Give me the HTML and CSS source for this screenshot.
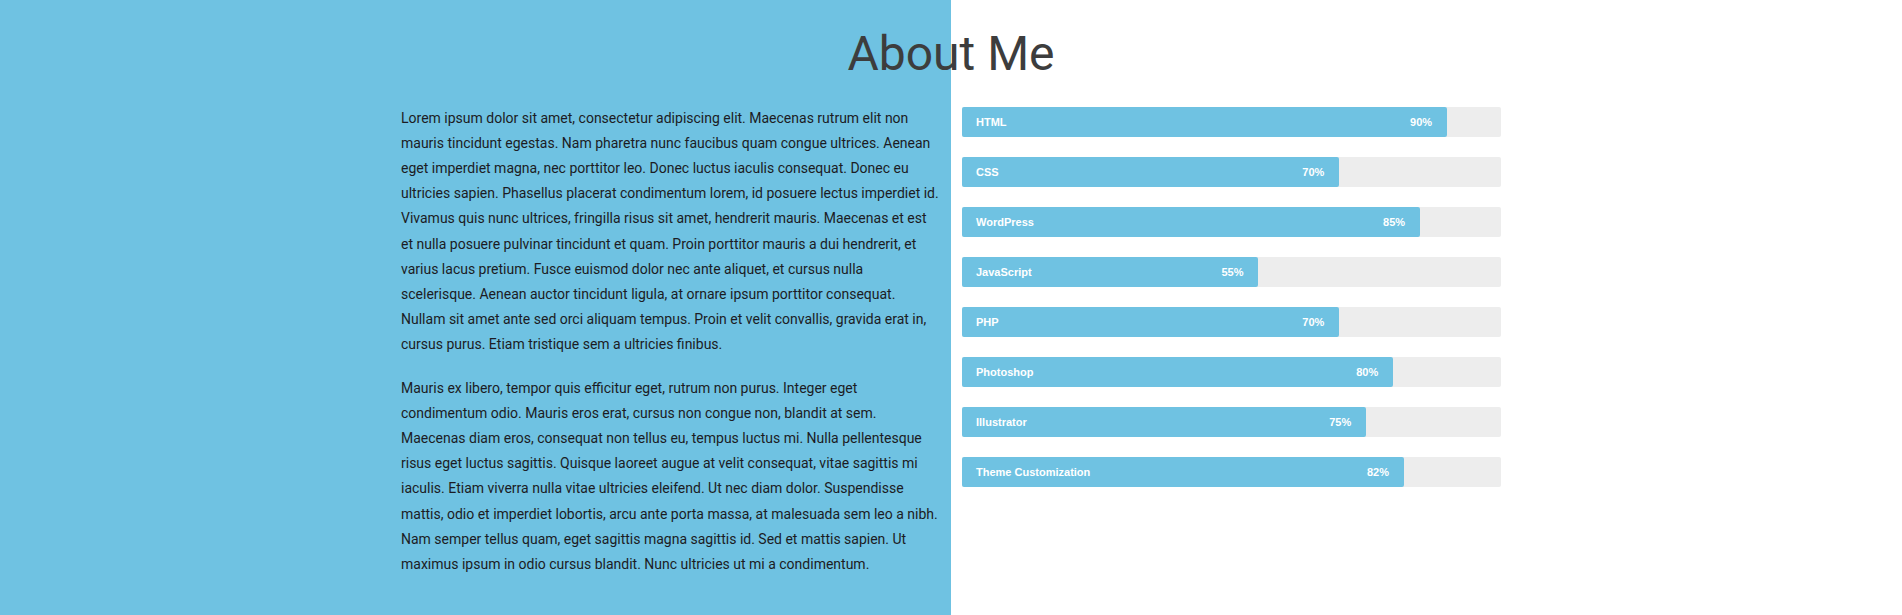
FILE: index.html
```html
<!DOCTYPE html>
<html lang="en">
<head>
<meta charset="utf-8">
<title>About Me</title>
<link rel="stylesheet" href="styles.css">
</head>
<body>
<section class="about">
  <h2 class="about-title">About Me</h2>
  <div class="about-inner">
    <div class="about-text">
      <p>Lorem ipsum dolor sit amet, consectetur adipiscing elit. Maecenas rutrum elit non mauris tincidunt egestas. Nam pharetra nunc faucibus quam congue ultrices. Aenean eget imperdiet magna, nec porttitor leo. Donec luctus iaculis consequat. Donec eu ultricies sapien. Phasellus placerat condimentum lorem, id posuere lectus imperdiet id. Vivamus quis nunc ultrices, fringilla risus sit amet, hendrerit mauris. Maecenas et est et nulla posuere pulvinar tincidunt et quam. Proin porttitor mauris a dui hendrerit, et varius lacus pretium. Fusce euismod dolor nec ante aliquet, et cursus nulla scelerisque. Aenean auctor tincidunt ligula, at ornare ipsum porttitor consequat. Nullam sit amet ante sed orci aliquam tempus. Proin et velit convallis, gravida erat in, cursus purus. Etiam tristique sem a ultricies finibus.</p>
      <p>Mauris ex libero, tempor quis efficitur eget, rutrum non purus. Integer eget condimentum odio. Mauris eros erat, cursus non congue non, blandit at sem. Maecenas diam eros, consequat non tellus eu, tempus luctus mi. Nulla pellentesque risus eget luctus sagittis. Quisque laoreet augue at velit consequat, vitae sagittis mi iaculis. Etiam viverra nulla vitae ultricies eleifend. Ut nec diam dolor. Suspendisse mattis, odio et imperdiet lobortis, arcu ante porta massa, at malesuada sem leo a nibh. Nam semper tellus quam, eget sagittis magna sagittis id. Sed et mattis sapien. Ut maximus ipsum in odio cursus blandit. Nunc ultricies ut mi a condimentum.</p>
    </div>
    <div class="skills">
      <div class="skill"><div class="skill-fill" style="width:90%"><span class="skill-name">HTML</span><span class="skill-pct">90%</span></div></div>
      <div class="skill"><div class="skill-fill" style="width:70%"><span class="skill-name">CSS</span><span class="skill-pct">70%</span></div></div>
      <div class="skill"><div class="skill-fill" style="width:85%"><span class="skill-name">WordPress</span><span class="skill-pct">85%</span></div></div>
      <div class="skill"><div class="skill-fill" style="width:55%"><span class="skill-name">JavaScript</span><span class="skill-pct">55%</span></div></div>
      <div class="skill"><div class="skill-fill" style="width:70%"><span class="skill-name">PHP</span><span class="skill-pct">70%</span></div></div>
      <div class="skill"><div class="skill-fill" style="width:80%"><span class="skill-name">Photoshop</span><span class="skill-pct">80%</span></div></div>
      <div class="skill"><div class="skill-fill" style="width:75%"><span class="skill-name">Illustrator</span><span class="skill-pct">75%</span></div></div>
      <div class="skill"><div class="skill-fill" style="width:82%"><span class="skill-name">Theme Customization</span><span class="skill-pct">82%</span></div></div>
    </div>
  </div>
</section>
</body>
</html>
```

FILE: styles.css
```css
* { box-sizing: border-box; }

html, body {
  margin: 0;
  padding: 0;
}

body {
  font-family: Roboto, "Liberation Sans", sans-serif;
  background: #fff;
}

.about {
  min-height: 615px;
  background: linear-gradient(to right, #6fc2e2 0, #6fc2e2 50%, #ffffff 50%, #ffffff 100%);
  padding-top: 25px;
}

.about-title {
  margin: 0;
  text-align: center;
  font-family: Roboto, sans-serif;
  font-weight: 400;
  font-size: 48px;
  line-height: 57.6px;
  color: #3d3d3d;
}

.about-inner {
  width: 1100px;
  margin: 24px auto 0;
  display: grid;
  grid-template-columns: 550px 550px;
  align-items: start;
}

.about-text {
  padding-right: 12px;
  margin-top: -1px;
  font-size: 14px;
  line-height: 25.2px;
  color: #1c1c24;
}

.about-text p {
  margin: 0 0 18px;
}

.skills {
  padding-left: 11px;
  display: flex;
  flex-direction: column;
  gap: 20px;
}

.skill {
  height: 30px;
  background: #ededed;
  border-radius: 2px;
}

.skill-fill {
  height: 100%;
  background: #6fc2e2;
  border-radius: 2px;
  display: flex;
  align-items: center;
  justify-content: space-between;
  padding: 0 15px 0 14px;
  font-family: "Liberation Sans", Arial, sans-serif;
  font-weight: 700;
  font-size: 11px;
  color: #ffffff;
}
```
